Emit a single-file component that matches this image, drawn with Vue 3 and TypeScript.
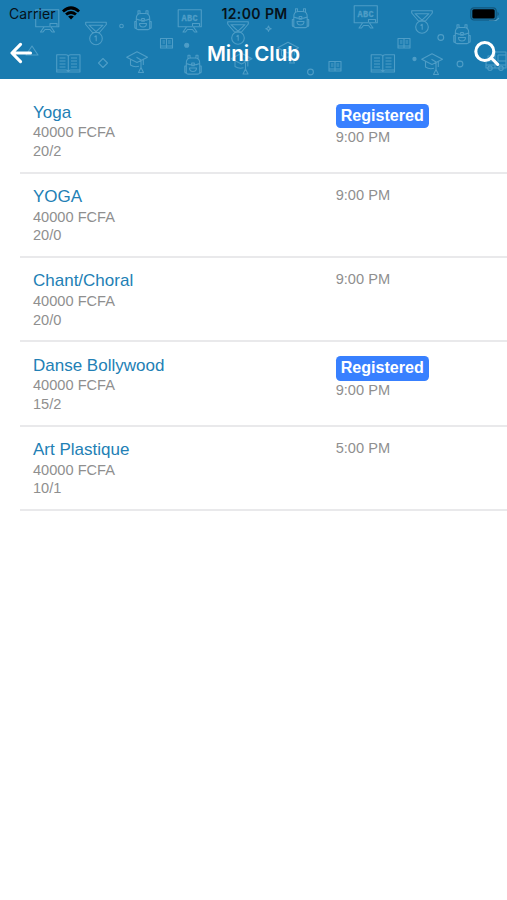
<script setup lang="ts">
interface Club {
  name: string
  price: string
  places: string
  time: string
  registered: boolean
}

interface Motif {
  kind: string
  x: number
  y: number
  label?: string
}

const clubs: Club[] = [
  { name: 'Yoga', price: '40000 FCFA', places: '20/2', time: '9:00 PM', registered: true },
  { name: 'YOGA', price: '40000 FCFA', places: '20/0', time: '9:00 PM', registered: false },
  { name: 'Chant/Choral', price: '40000 FCFA', places: '20/0', time: '9:00 PM', registered: false },
  { name: 'Danse Bollywood', price: '40000 FCFA', places: '15/2', time: '9:00 PM', registered: true },
  { name: 'Art Plastique', price: '40000 FCFA', places: '10/1', time: '5:00 PM', registered: false },
]

const motifs: Motif[] = [
  { kind: 'board', x: 35, y: 9 },
  { kind: 'board', x: 177.5, y: 9, label: 'ABC' },
  { kind: 'board', x: 353.5, y: 5, label: 'ABC' },
  { kind: 'medal', x: 85, y: 21.5 },
  { kind: 'medal', x: 227, y: 21 },
  { kind: 'medal', x: 411, y: 10 },
  { kind: 'bag', x: 134, y: 10 },
  { kind: 'bag', x: 184, y: 54.5 },
  { kind: 'bag', x: 291.5, y: 8 },
  { kind: 'bag', x: 453, y: 24 },
  { kind: 'book', x: 56, y: 54 },
  { kind: 'book', x: 370.5, y: 54 },
  { kind: 'mini', x: 160, y: 38 },
  { kind: 'mini', x: 328.5, y: 61 },
  { kind: 'mini', x: 397.5, y: 38 },
  { kind: 'cap', x: 126, y: 51 },
  { kind: 'cap', x: 230.5, y: 52.5 },
  { kind: 'cap', x: 277, y: 41.5 },
  { kind: 'cap', x: 421, y: 53 },
  { kind: 'bus', x: 485, y: 51 },
]
</script>

<template>
  <div class="screen">
    <header class="header">
      <svg class="pattern" width="507" height="79" viewBox="0 0 507 79" aria-hidden="true">
        <g v-for="(m, i) in motifs" :key="i" :transform="`translate(${m.x} ${m.y})`">
          <template v-if="m.kind === 'board'">
            <path d="M.7 .7H23.8V17.8H.7ZM9 18 5.5 23H8L10 20.5H15L17 23H19.5L16 18M15 17V14.5H22V17" />
            <text v-if="m.label" x="4" y="11.5" textLength="16">{{ m.label }}</text>
          </template>
          <template v-else-if="m.kind === 'medal'">
            <path d="M.7 .7H21.3V3L14.5 11H7.5L.7 3ZM4 3.7H18L11 10.2ZM9.5 15.5 11.2 14.3V19.7" />
            <circle cx="11" cy="17" r="6.3" />
          </template>
          <template v-else-if="m.kind === 'bag'">
            <path d="M2.3 9Q2 3.5 7 3.5H11Q16 3.5 15.7 9V18Q15.7 19.6 14 19.6H4Q2.3 19.6 2.3 18ZM4 4V.7H6V3.5M12 3.5V.7H14V4M2.3 9Q9 12 15.7 9M2.3 11.5H.8V17.5Q.8 18.5 2.3 18.5M15.7 11.5H17.2V17.5Q17.2 18.5 15.7 18.5M5.5 13.5H12.5Q12.5 17 9 17Q5.5 17 5.5 13.5ZM7.7 8.5H10.3V11.2H7.7Z" />
          </template>
          <template v-else-if="m.kind === 'book'">
            <path d="M.7 .7H10Q12 .7 12.3 2.5Q12.6 .7 14.6 .7H24V18H.7ZM12.3 2.5V17M.7 16H10Q12 16 12.3 18Q12.6 16 14.6 16H24M3.5 4H9.5M3.5 7H9.5M3.5 10H9.5M3.5 13H9.5M15 4H21M15 7H21M15 10H21M15 13H21" />
          </template>
          <template v-else-if="m.kind === 'mini'">
            <path d="M.5 .5H12.5V10H.5ZM6.5 .5V10M2.5 3H5M2.5 5H5M8 3H10.7M8 5H10.7M.5 8H12.5" />
          </template>
          <template v-else-if="m.kind === 'cap'">
            <path d="M.7 6.3 11 .7 21.5 6.3 11 11.5ZM4.5 8.3V14Q8 16.5 13 15.3M17.3 8.5V14M10.5 6.3 15 9V17M15 16.5 12.5 21.5H17.5Z" />
          </template>
          <template v-else>
            <path d="M10 1H21V17H1V11.5L3 9V5H10ZM10 1V17M3 10H10M13 4H21M13 4V10H21M1 14H21" />
            <circle cx="5" cy="17.2" r="2.2" />
            <circle cx="16" cy="17.2" r="2.2" />
          </template>
        </g>
        <path d="M32 46 38 55H26ZM103 58.5 107.5 63 103 67.5 98.5 63ZM268.5 26 269.3 27.9 271.2 28.7 269.3 29.5 268.5 31.4 267.7 29.5 265.8 28.7 267.7 27.9ZM247 58H251M489 20.5H496L499 18" />
        <circle cx="121.5" cy="26" r="1.8" />
        <circle class="filled" cx="186.7" cy="45.3" r="2" />
        <circle cx="310.5" cy="72" r="2.9" />
        <circle cx="440.8" cy="37.5" r="2.9" />
        <circle class="filled" cx="414.5" cy="59" r="1.6" />
        <circle cx="460" cy="64" r="2.9" />
      </svg>

      <div class="status">
        <div class="carrier">
          <span>Carrier</span>
          <svg width="18" height="14" viewBox="0 0 18 14" aria-hidden="true">
            <path d="M0 4.4Q9-3.9 18 4.4L16.1 6.4Q9 .4 1.9 6.4Z" />
            <path d="M3.1 7.5Q9 2.6 14.9 7.5L13 9.5Q9 6.3 5 9.5Z" />
            <path d="M6.1 10.5Q9 8.3 11.9 10.5L9 13.5Z" />
          </svg>
        </div>
        <span class="clock">12:00 PM</span>
        <svg class="battery" width="30" height="14" viewBox="0 0 30 14" aria-hidden="true">
          <rect class="shell" x=".8" y=".8" width="25.4" height="12.2" rx="3.2" />
          <rect x="2.3" y="2.2" width="22.4" height="9.4" rx="1.5" />
          <path class="cap" d="M27.5 4.6Q30 7 27.5 9.3Z" />
        </svg>
      </div>

      <div class="bar">
        <button class="icon-button" aria-label="Back">
          <svg width="23" height="22" viewBox="0 0 23 22">
            <path d="M10.5 2.3 2 11 10.5 19.7M2.5 11H20.5" />
          </svg>
        </button>
        <h1>Mini Club</h1>
        <button class="icon-button" aria-label="Search">
          <svg width="27" height="27" viewBox="0 0 27 27">
            <circle cx="11.8" cy="11.5" r="9" />
            <path d="M18.3 18 24.7 24.3" />
          </svg>
        </button>
      </div>
    </header>

    <ul class="list">
      <li v-for="(club, i) in clubs" :key="i" class="row">
        <div class="info">
          <h2>{{ club.name }}</h2>
          <p>{{ club.price }}</p>
          <p>{{ club.places }}</p>
        </div>
        <div class="side">
          <span v-if="club.registered" class="badge">Registered</span>
          <p>{{ club.time }}</p>
        </div>
      </li>
    </ul>
  </div>
</template>

<style>
body {
  margin: 0;
  background: #fff;
}
</style>

<style scoped>
.screen {
  width: 507px;
  height: 900px;
  overflow: hidden;
  background: #fff;
  font-family: "Liberation Sans", Arial, sans-serif;
}

.header {
  position: relative;
  height: 79px;
  background: #197bb0;
  overflow: hidden;
  font-family: Inter, sans-serif;
}

.pattern {
  position: absolute;
  inset: 0;
  fill: none;
  stroke: #63abd0;
  stroke-width: 1.1;
  stroke-linejoin: round;
  opacity: 0.72;
}

.pattern text {
  font: 600 8.5px "Liberation Mono", monospace;
  fill: #63abd0;
  stroke: #63abd0;
  stroke-width: 0.3;
}

.pattern .filled {
  fill: #63abd0;
}

.status {
  position: relative;
  display: grid;
  grid-template-columns: 1fr auto 1fr;
  align-items: center;
  height: 27px;
  padding: 0 7px 0 9px;
  color: #06121a;
  font-size: 14px;
  line-height: 27px;
}

.carrier {
  display: flex;
  align-items: center;
  gap: 6px;
  letter-spacing: 0.1px;
}

.carrier svg {
  margin-top: -1px;
}

.clock {
  font-size: 14px;
  font-weight: 600;
  letter-spacing: 0.4px;
}

.battery {
  justify-self: end;
}

.battery .shell {
  fill: none;
  stroke: #12577c;
  stroke-width: 1.2;
}

.battery .cap {
  fill: #12577c;
}

.bar {
  position: relative;
  display: grid;
  grid-template-columns: 1fr auto 1fr;
  align-items: center;
  height: 52px;
  padding: 0 7px 0 10px;
}

.bar h1 {
  margin: 1px 3px 0 0;
  color: #fff;
  font-size: 20.5px;
  font-weight: 600;
  line-height: 51px;
}

.icon-button {
  display: flex;
  padding: 0;
  border: 0;
  background: none;
}

.icon-button:last-child {
  justify-self: end;
}

.icon-button svg {
  fill: none;
  stroke: #fff;
  stroke-width: 3.1;
  stroke-linecap: round;
  stroke-linejoin: round;
}

.list {
  margin: 0;
  padding: 10.4px 0 0 20px;
  list-style: none;
}

.row {
  display: grid;
  grid-template-columns: 302.7px 1fr;
  box-sizing: border-box;
  height: 84.3px;
  padding: 12.4px 0 0 13px;
  border-bottom: 2px solid #e9e9eb;
}

.info h2 {
  margin: 0;
  color: #2280b5;
  font-size: 17px;
  font-weight: 400;
  line-height: 21px;
}

.row p {
  margin: 0;
  color: #8f8f8f;
  font-size: 14.6px;
  line-height: 18.7px;
}

.info h2 + p {
  margin-top: 0.6px;
}

.side {
  display: flex;
  flex-direction: column;
  align-items: flex-start;
}

.badge {
  box-sizing: border-box;
  height: 24.7px;
  margin-top: 1.8px;
  padding: 0 5px;
  border-radius: 4.5px;
  background: #3880ff;
  color: #fff;
  font-size: 16.1px;
  font-weight: 700;
  line-height: 23.5px;
}
</style>
